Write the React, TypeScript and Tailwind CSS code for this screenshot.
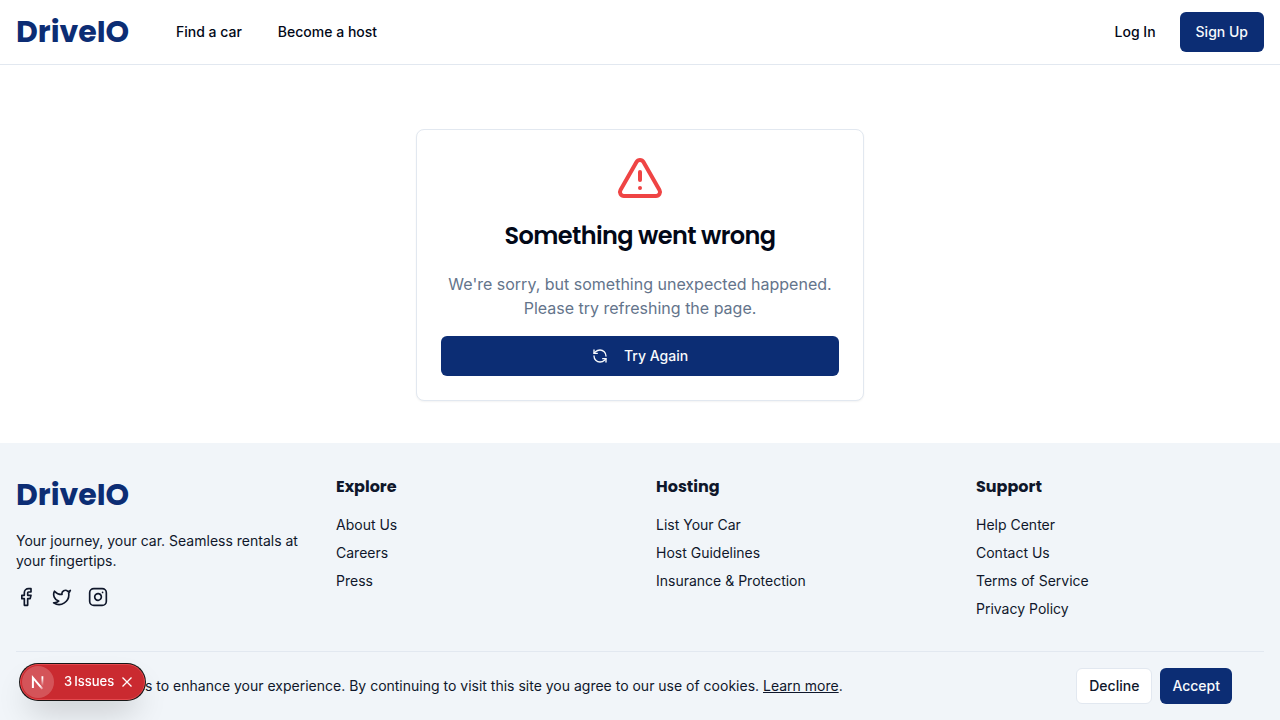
import { useState } from "react";
import { Facebook, Instagram, RefreshCcw, TriangleAlert, Twitter } from "lucide-react";

const columns = [
  { title: "Explore", links: ["About Us", "Careers", "Press"] },
  { title: "Hosting", links: ["List Your Car", "Host Guidelines", "Insurance & Protection"] },
  {
    title: "Support",
    links: ["Help Center", "Contact Us", "Terms of Service", "Privacy Policy"],
  },
];

const socials = [
  { label: "Facebook", Icon: Facebook },
  { label: "Twitter", Icon: Twitter },
  { label: "Instagram", Icon: Instagram },
];

function Logo() {
  return (
    <a
      href="#"
      className="block w-28 font-['Poppins','Inter',sans-serif] text-3xl leading-10 font-bold text-[#0c2d74]"
    >
      DriveIO
    </a>
  );
}

function Header() {
  return (
    <header className="flex h-[65px] items-center justify-between border-b border-slate-200 px-4">
      <div className="flex items-center gap-12">
        <Logo />
        <nav className="flex gap-9 text-sm font-medium">
          <a href="#">Find a car</a>
          <a href="#">Become a host</a>
        </nav>
      </div>
      <div className="flex items-center gap-2 text-sm font-medium">
        <button type="button" className="h-10 rounded-md px-4">
          Log In
        </button>
        <button type="button" className="h-10 rounded-md bg-[#0c2d74] px-4 text-slate-50">
          Sign Up
        </button>
      </div>
    </header>
  );
}

function ErrorCard() {
  return (
    <section className="w-full max-w-md rounded-lg border border-slate-200 bg-white p-6 text-center shadow-xs">
      <TriangleAlert className="mx-auto size-12 text-[#ef4444]" />
      <h1 className="mt-4 font-['Poppins','Inter',sans-serif] text-2xl leading-9 font-semibold tracking-tight">
        Something went wrong
      </h1>
      <p className="mt-[18px] text-base text-[#64748b]">
        We're sorry, but something unexpected happened. Please try refreshing the page.
      </p>
      <button
        type="button"
        className="mt-4 flex h-10 w-full items-center justify-center gap-4 rounded-md bg-[#0c2d74] text-sm font-medium text-slate-50"
      >
        <RefreshCcw className="size-4" />
        Try Again
      </button>
    </section>
  );
}

function Footer() {
  return (
    <footer className="bg-slate-100 px-4 pt-8 pb-[68px] text-sm text-slate-900">
      <div className="grid grid-cols-4 gap-8 border-b border-slate-200 pb-8">
        <div>
          <Logo />
          <p className="mt-4">Your journey, your car. Seamless rentals at your fingertips.</p>
          <div className="mt-4 flex gap-4">
            {socials.map(({ label, Icon }) => (
              <a key={label} href="#" aria-label={label}>
                <Icon className="size-5" />
              </a>
            ))}
          </div>
        </div>
        {columns.map((column) => (
          <div key={column.title}>
            <h2 className="font-['Poppins','Inter',sans-serif] text-base font-bold">
              {column.title}
            </h2>
            <ul className="mt-4 space-y-2">
              {column.links.map((link) => (
                <li key={link}>
                  <a href="#">{link}</a>
                </li>
              ))}
            </ul>
          </div>
        ))}
      </div>
    </footer>
  );
}

function CookieBar({ onClose }: { onClose: () => void }) {
  return (
    <div className="fixed inset-x-0 bottom-0 flex items-center justify-between gap-4 bg-slate-100 px-12 py-4 text-sm text-slate-900">
      <p>
        We use cookies to enhance your experience. By continuing to visit this site you agree to
        our use of cookies.{" "}
        <a href="#" className="underline">
          Learn more
        </a>
        .
      </p>
      <div className="flex gap-2 font-medium">
        <button
          type="button"
          onClick={onClose}
          className="h-9 rounded-md border border-slate-200 bg-white px-3"
        >
          Decline
        </button>
        <button
          type="button"
          onClick={onClose}
          className="h-9 rounded-md bg-[#0c2d74] px-3 text-slate-50"
        >
          Accept
        </button>
      </div>
    </div>
  );
}

function IssuesBadge({ onClose }: { onClose: () => void }) {
  return (
    <div className="fixed bottom-5 left-5 flex h-9 items-center rounded-full border border-[#e5484d] bg-[#ca2a30] pr-2 pl-px text-[13px] font-medium text-white shadow-[0_0_0_1px_#171717,0_16px_32px_-8px_rgba(0,0,0,0.24)]">
      <button
        type="button"
        aria-label="Open developer tools"
        className="flex size-8 items-center justify-center rounded-full bg-white/20"
      >
        <svg viewBox="0 0 32 32" className="size-8" fill="none" aria-hidden="true">
          <defs>
            <linearGradient id="n-diagonal" x1="16" y1="15" x2="22" y2="23" gradientUnits="userSpaceOnUse">
              <stop offset="0.5" stopColor="#fff" />
              <stop offset="1" stopColor="#fff" stopOpacity="0.2" />
            </linearGradient>
            <linearGradient id="n-stem" x1="20" y1="10" x2="20" y2="20" gradientUnits="userSpaceOnUse">
              <stop offset="0.2" stopColor="#fff" />
              <stop offset="1" stopColor="#fff" stopOpacity="0" />
            </linearGradient>
          </defs>
          <path d="M10.9 22V11.6L20.4 22.8" stroke="url(#n-diagonal)" strokeWidth="2" />
          <path d="M20.4 10.2V20" stroke="url(#n-stem)" strokeWidth="1.8" />
        </svg>
      </button>
      <button type="button" className="ml-2.5 flex gap-0.5">
        <span>3</span>
        <span>Issues</span>
      </button>
      <button
        type="button"
        aria-label="Hide issues"
        onClick={onClose}
        className="ml-1 flex size-[18px] items-center justify-center"
      >
        <svg viewBox="0 0 14 14" className="size-3.5" fill="none" aria-hidden="true">
          <path d="M2.5 2.5 11.5 11.5M11.5 2.5 2.5 11.5" stroke="currentColor" strokeWidth="1.3" />
        </svg>
      </button>
    </div>
  );
}

export default function App() {
  const [cookieBar, setCookieBar] = useState(true);
  const [badge, setBadge] = useState(true);

  return (
    <div className="flex min-h-screen flex-col bg-white font-['Inter',sans-serif] text-[#020817]">
      <Header />
      <main className="flex flex-1 items-start justify-center px-4 pt-16 pb-10">
        <ErrorCard />
      </main>
      <Footer />
      {cookieBar && <CookieBar onClose={() => setCookieBar(false)} />}
      {badge && <IssuesBadge onClose={() => setBadge(false)} />}
    </div>
  );
}
